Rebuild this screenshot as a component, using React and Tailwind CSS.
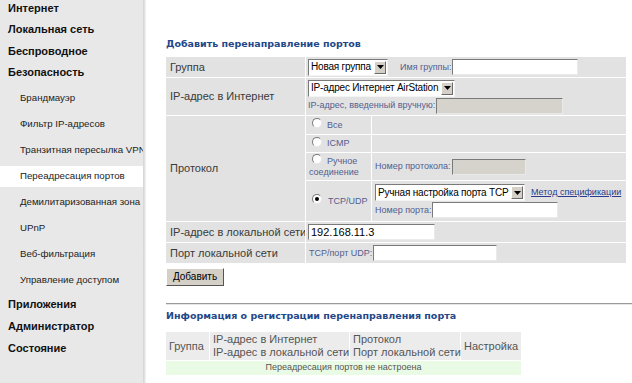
import React from "react";

const SANS = "font-['Liberation_Sans',Arial,sans-serif]";

function Input({ w, gray, value }) {
  return (
    <div
      className={`h-[16px] ${w} border border-t-[#7a7a7a] border-l-[#7a7a7a] border-b-[#eaeaea] border-r-[#eaeaea] ${
        gray ? "bg-[#d6d3cc]" : "bg-white"
      } flex items-center px-[2px] text-[11px] leading-none text-black shrink-0`}
    >
      {value}
    </div>
  );
}

function Select({ label, w }) {
  return (
    <div
      className={`h-[17px] ${w} border border-t-[#7a7a7a] border-l-[#7a7a7a] border-b-[#f4f4f4] border-r-[#f4f4f4] bg-white flex items-center shrink-0`}
    >
      <span className="flex-1 pl-[2px] text-[10px] tracking-[-0.2px] leading-none text-black whitespace-nowrap overflow-hidden">
        {label}
      </span>
      <span className="w-[12px] h-[13px] mr-[1px] bg-[#d4d0c8] border border-t-[#fff] border-l-[#fff] border-b-[#6a6a6a] border-r-[#6a6a6a] flex items-center justify-center shrink-0">
        <svg width="7" height="4" viewBox="0 0 7 4">
          <path d="M0 0h7L3.5 4z" fill="#000" />
        </svg>
      </span>
    </div>
  );
}

function Radio({ checked }) {
  return (
    <span className="inline-flex w-[10px] h-[10px] rounded-full bg-white border border-t-[#7a7a7a] border-l-[#7a7a7a] border-b-[#e8e8e8] border-r-[#e8e8e8] items-center justify-center shrink-0">
      {checked && <span className="w-[4px] h-[4px] rounded-full bg-black" />}
    </span>
  );
}

const small = "text-[9px] leading-[11px] text-[#52608f] whitespace-nowrap";

function Top({ children }) {
  return (
    <div className="h-[21.5px] flex items-center pl-[8px] text-[11px] font-bold text-[#111]">
      {children}
    </div>
  );
}
function Sub({ children, active }) {
  return (
    <div className="h-[26px] flex items-center">
      <div
        className={`h-[21px] w-full flex items-center pl-[20px] text-[9.7px] text-[#222] whitespace-nowrap overflow-hidden ${
          active ? "bg-white" : ""
        }`}
      >
        {children}
      </div>
    </div>
  );
}

export default function App() {
  return (
    <div className={`${SANS} w-[632px] h-[383px] overflow-hidden bg-white flex`}>
      {/* Sidebar */}
      <div className="w-[146px] h-full flex shrink-0">
        <div className="w-[143px] h-full bg-[#e8e8e8] overflow-hidden">
          <div className="-mt-[3px]">
            <Top>Интернет</Top>
            <Top>Локальная сеть</Top>
            <Top>Беспроводное</Top>
            <Top>Безопасность</Top>
          </div>
          <div className="mt-[2px]">
            <Sub>Брандмауэр</Sub>
            <Sub>Фильтр IP-адресов</Sub>
            <Sub>Транзитная пересылка VPN</Sub>
            <Sub active>Переадресация портов</Sub>
            <Sub>Демилитаризованная зона</Sub>
            <Sub>UPnP</Sub>
            <Sub>Веб-фильтрация</Sub>
            <Sub>Управление доступом</Sub>
          </div>
          <div className="[&>div]:h-[22px]">
            <Top>Приложения</Top>
            <Top>Администратор</Top>
            <Top>Состояние</Top>
          </div>
        </div>
        <div className="w-[3px] h-full bg-gradient-to-r from-[#d2d2d2] to-[#f4f4f4]" />
      </div>

      {/* Main */}
      <div className="flex-1 pl-[20px] pt-[37px]">
        <div className="font-['DejaVu_Sans',Verdana,sans-serif] text-[9.5px] font-bold leading-[14px] text-[#234788]">
          Добавить перенаправление портов
        </div>

        {/* Form table */}
        <div className="mt-[6px] w-[460px] flex flex-col gap-px bg-white text-[11px] text-[#3a3a3a] whitespace-nowrap">
          {/* Группа */}
          <div className="flex gap-px h-[20px]">
            <div className="w-[139px] bg-[#e2e2e2] flex items-center pl-[4px]">Группа</div>
            <div className="flex-1 bg-[#e2e2e2] flex items-center pl-[2px]">
              <Select label="Новая группа" w="w-[80px]" />
              <span className={`${small} ml-[12px] mr-[1px]`}>Имя группы:</span>
              <Input w="w-[126px]" />
            </div>
          </div>
          {/* IP Internet */}
          <div className="flex gap-px h-[37px]">
            <div className="w-[139px] bg-[#e2e2e2] flex items-center pl-[4px]">IP-адрес в Интернет</div>
            <div className="flex-1 bg-[#e2e2e2] flex flex-col justify-center gap-[1px] pl-[2px]">
              <Select label="IP-адрес Интернет AirStation" w="w-[147px]" />
              <div className="flex items-center">
                <span className={`${small} mr-[1px]`}>IP-адрес, введенный вручную:</span>
                <Input w="w-[127px]" gray />
              </div>
            </div>
          </div>
          {/* Протокол */}
          <div className="flex gap-px h-[105px]">
            <div className="w-[139px] bg-[#e2e2e2] flex items-center pl-[4px]">Протокол</div>
            <div className="flex-1 flex flex-col gap-px">
              <div className="flex gap-px h-[18px]">
                <div className="w-[65px] bg-[#e2e2e2] flex items-center pl-[6px] gap-[5px]">
                  <span className="-mt-[4px] flex"><Radio /></span>
                  <span className={small}>Все</span>
                </div>
                <div className="flex-1 bg-[#e2e2e2]" />
              </div>
              <div className="flex gap-px h-[17px]">
                <div className="w-[65px] bg-[#e2e2e2] flex items-center pl-[6px] gap-[5px]">
                  <span className="-mt-[4px] flex"><Radio /></span>
                  <span className={small}>ICMP</span>
                </div>
                <div className="flex-1 bg-[#e2e2e2]" />
              </div>
              <div className="flex gap-px h-[27px]">
                <div className="w-[65px] bg-[#e2e2e2] flex flex-col justify-center pl-[3px]">
                  <div className="flex items-center gap-[5px] pl-[3px]">
                    <span className="-mt-[4px] flex"><Radio /></span>
                    <span className={small}>Ручное</span>
                  </div>
                  <span className={small}>соединение</span>
                </div>
                <div className="flex-1 bg-[#e2e2e2] flex items-center pl-[3px]">
                  <span className={`${small} mr-[1px]`}>Номер протокола:</span>
                  <Input w="w-[74px]" gray />
                </div>
              </div>
              <div className="flex gap-px h-[40px]">
                <div className="w-[65px] bg-[#e2e2e2] flex items-center pl-[6px] gap-[6px]">
                  <span className="-mt-[4px] flex"><Radio checked /></span>
                  <span className={small}>TCP/UDP</span>
                </div>
                <div className="flex-1 bg-[#e2e2e2] flex flex-col justify-center gap-[1px] pl-[3px]">
                  <div className="flex items-center">
                    <Select label="Ручная настройка порта TCP" w="w-[150px]" />
                    <span className="ml-[6px] text-[9px] leading-[11px] text-[#2a3a8c] underline whitespace-nowrap">
                      Метод спецификации
                    </span>
                  </div>
                  <div className="flex items-center">
                    <span className={`${small} mr-[1px]`}>Номер порта:</span>
                    <Input w="w-[126px]" />
                  </div>
                </div>
              </div>
            </div>
          </div>
          {/* IP local */}
          <div className="flex gap-px h-[20px]">
            <div className="w-[139px] bg-[#e2e2e2] flex items-center pl-[4px] overflow-hidden">IP-адрес в локальной сети</div>
            <div className="flex-1 bg-[#e2e2e2] flex items-center pl-[2px]">
              <Input w="w-[127px]" value="192.168.11.3" />
            </div>
          </div>
          {/* Port local */}
          <div className="flex gap-px h-[20px]">
            <div className="w-[139px] bg-[#e2e2e2] flex items-center pl-[4px]">Порт локальной сети</div>
            <div className="flex-1 bg-[#e2e2e2] flex items-center pl-[3px]">
              <span className={`${small} mr-[1px]`}>TCP/порт UDP:</span>
              <Input w="w-[124px]" />
            </div>
          </div>
        </div>

        <button className="mt-[5px] w-[58px] h-[18px] bg-[#d4d0c8] border border-t-[#fff] border-l-[#fff] border-b-[#555] border-r-[#555] text-[10px] leading-none text-black flex items-center justify-center">
          Добавить
        </button>

        <div className="mt-[17px] h-[2px] border-t border-t-[#9a9a9a] border-b border-b-[#e6e6e6]" />

        <div className="mt-[4px] font-['DejaVu_Sans',Verdana,sans-serif] text-[9.5px] font-bold leading-[14px] text-[#234788]">
          Информация о регистрации перенаправления порта
        </div>

        <div className="mt-[9px] w-[355px] flex flex-col gap-px bg-white text-[11px] text-[#555] whitespace-nowrap">
          <div className="flex gap-px h-[28px]">
            <div className="w-[43px] bg-[#ececec] flex items-center pl-[3px]">Группа</div>
            <div className="w-[139px] bg-[#ececec] flex flex-col justify-center pl-[3px] leading-[13px]">
              <span>IP-адрес в Интернет</span>
              <span>IP-адрес в локальной сети</span>
            </div>
            <div className="w-[110px] bg-[#ececec] flex flex-col justify-center pl-[3px] leading-[13px]">
              <span>Протокол</span>
              <span>Порт локальной сети</span>
            </div>
            <div className="flex-1 bg-[#ececec] flex items-center pl-[3px]">Настройка</div>
          </div>
          <div className="h-[14px] bg-[#e9fae5] flex items-center justify-center text-[9px] text-[#555]">
            Переадресация портов не настроена
          </div>
        </div>
      </div>
    </div>
  );
}
